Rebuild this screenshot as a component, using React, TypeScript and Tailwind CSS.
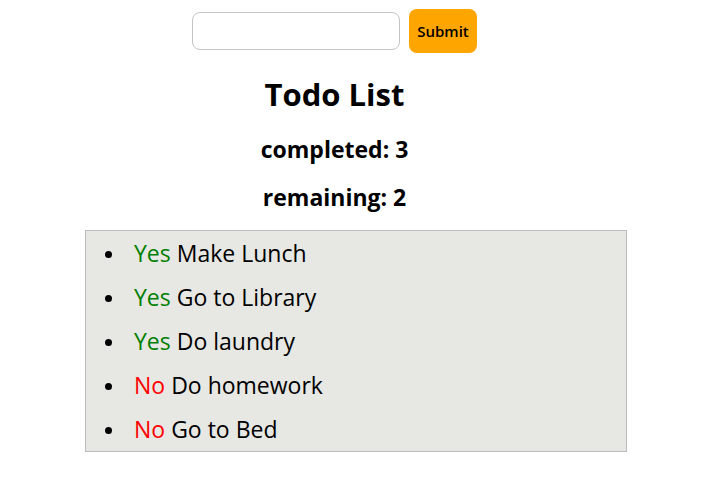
import React from "react";

const todos = [
  { done: true, text: "Make Lunch" },
  { done: true, text: "Go to Library" },
  { done: true, text: "Do laundry" },
  { done: false, text: "Do homework" },
  { done: false, text: "Go to Bed" },
];

export default function App() {
  return (
    <div className="min-h-[500px] w-[712px] bg-white text-black font-['Open_Sans',sans-serif]">
      <div className="flex flex-col pr-[43px]">
        <div className="flex items-center justify-center gap-[9px] pt-[9px]">
          <input className="h-[38px] w-[208px] rounded-[8px] border border-[#c4c4c4] bg-white px-2 outline-none" />
          <button className="h-[44px] w-[68px] rounded-[8px] bg-[#ffa500] text-[15px] font-semibold text-black">
            Submit
          </button>
        </div>
        <h1 className="mt-[21px] text-center text-[31px] font-bold leading-[40px]">Todo List</h1>
        <h3 className="mt-[21px] text-center text-[23px] font-bold leading-[28px]">completed: 3</h3>
        <h3 className="mt-[20px] text-center text-[23px] font-bold leading-[28px]">remaining: 2</h3>
      </div>
      <ul className="mx-auto mt-[19px] w-[542px] border border-[#bdbdbd] bg-[#e7e7e3]">
        {todos.map((t) => (
          <li key={t.text} className="flex h-[44px] items-center text-[23px] leading-[30px]">
            <span className="ml-[19px] mr-[22px] mt-[2px] h-[7px] w-[7px] shrink-0 rounded-full bg-black" />
            <span>
              <span className={t.done ? "text-[#008000]" : "text-[#ff0000]"}>{t.done ? "Yes" : "No"}</span> {t.text}
            </span>
          </li>
        ))}
      </ul>
    </div>
  );
}
